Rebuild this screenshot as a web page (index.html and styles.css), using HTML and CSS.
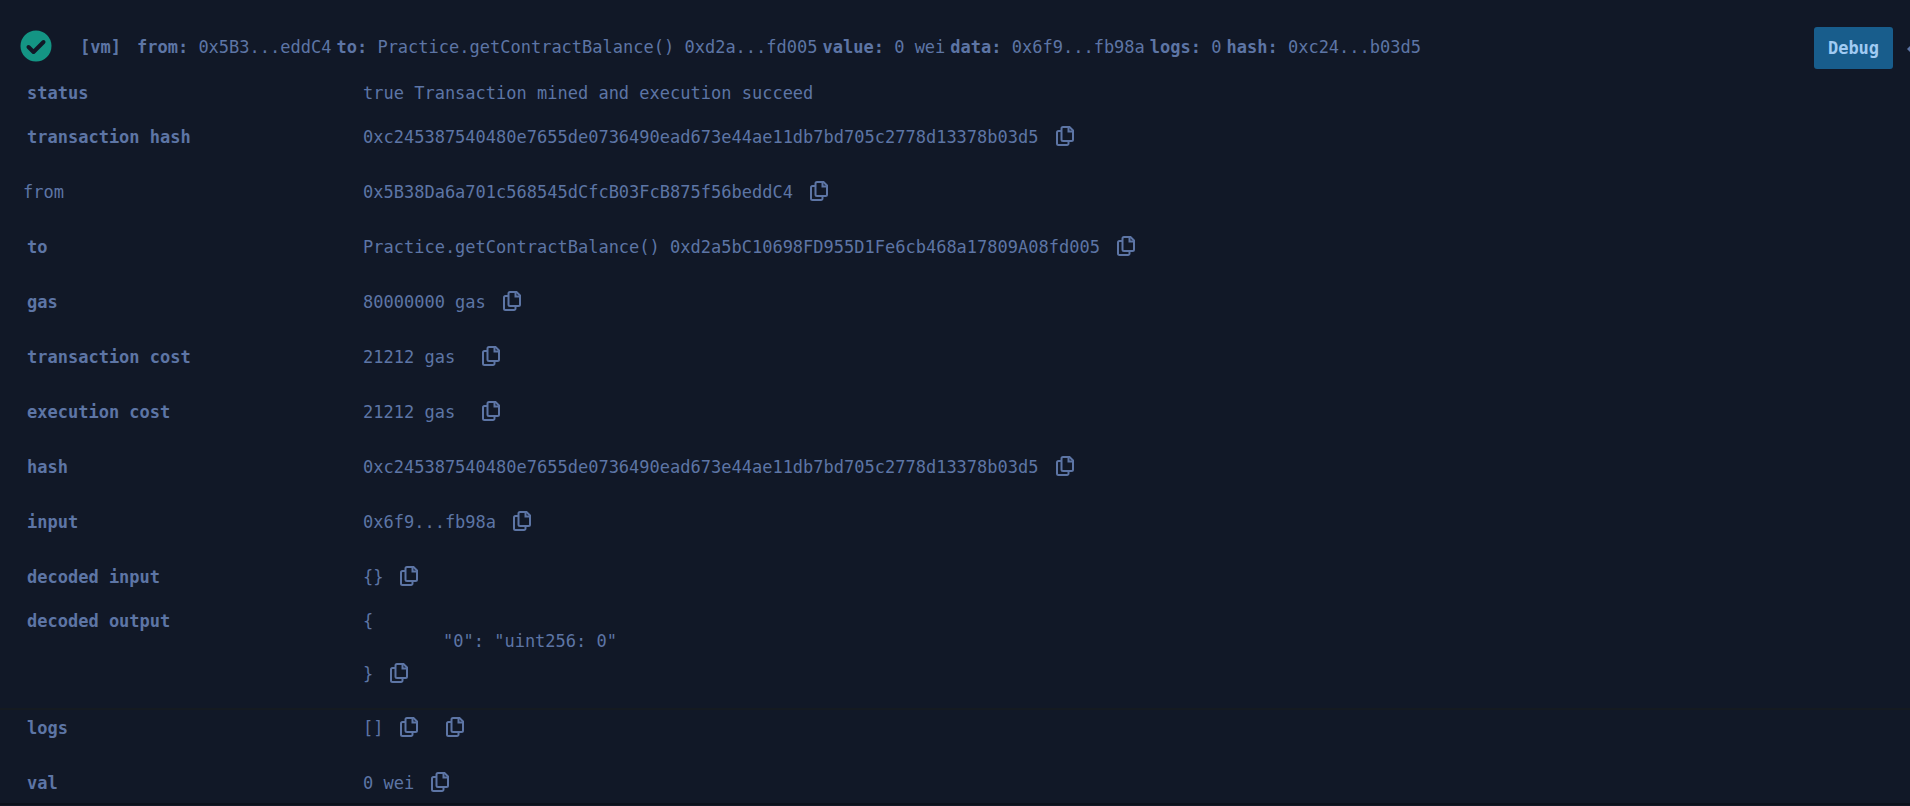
FILE: index.html
```html
<!DOCTYPE html>
<html lang="en">
  <head>
    <meta charset="UTF-8" />
    <meta name="viewport" content="width=device-width, initial-scale=1.0" />
    <title>Transaction</title>
    <link rel="stylesheet" href="styles.css">
  </head>
  <body>
    <svg class="sprite" aria-hidden="true">
      <symbol id="copy" viewBox="0 0 18 20">
        <path d="M5 5H2.500A1.500 1.500 0 0 0 1 6.500v11A1.500 1.500 0 0 0 2.500 19h8.500a1.500 1.500 0 0 0 1.500-1.500V15" />
        <path d="M7 1h6.500l3.500 3.500v9A1.500 1.500 0 0 1 15.500 15H7a1.500 1.500 0 0 1-1.500-1.500v-11A1.500 1.500 0 0 1 7 1z" />
        <path d="M12.500 1.500v4h4" />
      </symbol>
    </svg>
    <header class="log">
      <svg class="check" viewBox="0 0 32 32" aria-hidden="true">
        <circle cx="16" cy="16" r="15.5" />
        <path d="M8.500 17l5 5L23.500 12" />
      </svg>
      <span class="env">[vm]</span>
      <div class="summary">
        <span><b>from:</b> 0x5B3...eddC4</span>
        <span><b>to:</b> Practice.getContractBalance() 0xd2a...fd005</span>
        <span><b>value:</b> 0 wei</span>
        <span><b>data:</b> 0x6f9...fb98a</span>
        <span><b>logs:</b> 0</span>
        <span><b>hash:</b> 0xc24...b03d5</span>
      </div>
      <button class="debug" type="button">Debug</button>
      <svg class="arrow" viewBox="0 0 17 42" aria-hidden="true">
        <path d="M17 19l-3 3 3 3z" />
      </svg>
    </header>
    <table class="details">
      <tr class="tight">
        <th scope="row">status</th>
        <td>true Transaction mined and execution succeed</td>
      </tr>
      <tr class="tight">
        <th scope="row">transaction hash</th>
        <td>0xc245387540480e7655de0736490ead673e44ae11db7bd705c2778d13378b03d5<button class="copy" type="button" aria-label="Copy"><svg><use href="#copy" /></svg></button></td>
      </tr>
      <tr>
        <th scope="row" class="plain">from</th>
        <td>0x5B38Da6a701c568545dCfcB03FcB875f56beddC4<button class="copy" type="button" aria-label="Copy"><svg><use href="#copy" /></svg></button></td>
      </tr>
      <tr>
        <th scope="row">to</th>
        <td>Practice.getContractBalance() 0xd2a5bC10698FD955D1Fe6cb468a17809A08fd005<button class="copy" type="button" aria-label="Copy"><svg><use href="#copy" /></svg></button></td>
      </tr>
      <tr>
        <th scope="row">gas</th>
        <td>80000000 gas<button class="copy" type="button" aria-label="Copy"><svg><use href="#copy" /></svg></button></td>
      </tr>
      <tr>
        <th scope="row">transaction cost</th>
        <td>21212 gas&nbsp;<button class="copy" type="button" aria-label="Copy"><svg><use href="#copy" /></svg></button></td>
      </tr>
      <tr>
        <th scope="row">execution cost</th>
        <td>21212 gas&nbsp;<button class="copy" type="button" aria-label="Copy"><svg><use href="#copy" /></svg></button></td>
      </tr>
      <tr>
        <th scope="row">hash</th>
        <td>0xc245387540480e7655de0736490ead673e44ae11db7bd705c2778d13378b03d5<button class="copy" type="button" aria-label="Copy"><svg><use href="#copy" /></svg></button></td>
      </tr>
      <tr>
        <th scope="row">input</th>
        <td>0x6f9...fb98a<button class="copy" type="button" aria-label="Copy"><svg><use href="#copy" /></svg></button></td>
      </tr>
      <tr>
        <th scope="row">decoded input</th>
        <td>{}<button class="copy" type="button" aria-label="Copy"><svg><use href="#copy" /></svg></button></td>
      </tr>
      <tr class="tight output">
        <th scope="row">decoded output</th>
        <td>
          <div>{</div>
          <div class="value">"0": "uint256: 0"</div>
          <div>}<button class="copy" type="button" aria-label="Copy"><svg><use href="#copy" /></svg></button></div>
        </td>
      </tr>
      <tr class="logs">
        <th scope="row">logs</th>
        <td>[]<button class="copy" type="button" aria-label="Copy"><svg><use href="#copy" /></svg></button>&nbsp;<button class="copy" type="button" aria-label="Copy raw logs"><svg><use href="#copy" /></svg></button></td>
      </tr>
      <tr class="last">
        <th scope="row">val</th>
        <td>0 wei<button class="copy" type="button" aria-label="Copy"><svg><use href="#copy" /></svg></button></td>
      </tr>
    </table>
  </body>
</html>
```

FILE: styles.css
```css
body {
  margin: 0;
  background-color: #111827;
  color: #5d75a5;
  font-family: Consolas, "DejaVu Sans Mono", monospace;
  font-size: 17px;
  line-height: 20px;
  overflow-x: hidden;
}
.sprite {
  display: none;
}
.log {
  display: flex;
  align-items: flex-start;
  padding: 27px 0 2px 20px;
}
.check {
  width: 32px;
  height: 32px;
  margin: 3px 28px 0 0;
}
.check circle {
  fill: #149584;
}
.check path {
  fill: none;
  stroke: #111827;
  stroke-width: 4;
  stroke-linecap: round;
  stroke-linejoin: round;
}
.env {
  padding-top: 10px;
  margin-right: 16px;
  font-weight: bold;
}
.summary {
  display: flex;
  flex: 1;
  gap: 5px;
  padding-top: 10px;
  white-space: nowrap;
}
.debug {
  height: 42px;
  width: 79px;
  padding: 0;
  border: none;
  border-radius: 3px;
  background-color: #185d8c;
  color: #a0cbf3;
  font: inherit;
  font-weight: bold;
  cursor: pointer;
}
.arrow {
  width: 17px;
  height: 42px;
  fill: #5d75a5;
}
.details {
  width: 100%;
  border-spacing: 0;
}
th,
td {
  padding: 23px 0 12px;
  text-align: left;
  vertical-align: top;
}
th {
  width: 336px;
  padding-left: 27px;
}
.plain {
  padding-left: 23px;
  font-weight: normal;
}
.tight th,
.tight td {
  padding-top: 12px;
}
.output th,
.output td {
  padding-bottom: 24px;
  border-bottom: 2px solid #151a20;
}
.logs th,
.logs td {
  padding-top: 8px;
}
.last th,
.last td {
  padding-bottom: 10px;
  border-bottom: 2px solid #0c111b;
}
.copy {
  width: 18px;
  height: 20px;
  margin: -1px 0 0 17px;
  padding: 0;
  border: none;
  background: none;
  color: inherit;
  vertical-align: top;
  cursor: pointer;
}
.copy svg {
  display: block;
  width: 18px;
  height: 20px;
  fill: none;
  stroke: currentColor;
  stroke-width: 2;
}
.value {
  padding: 0 0 13px 80px;
}
```
